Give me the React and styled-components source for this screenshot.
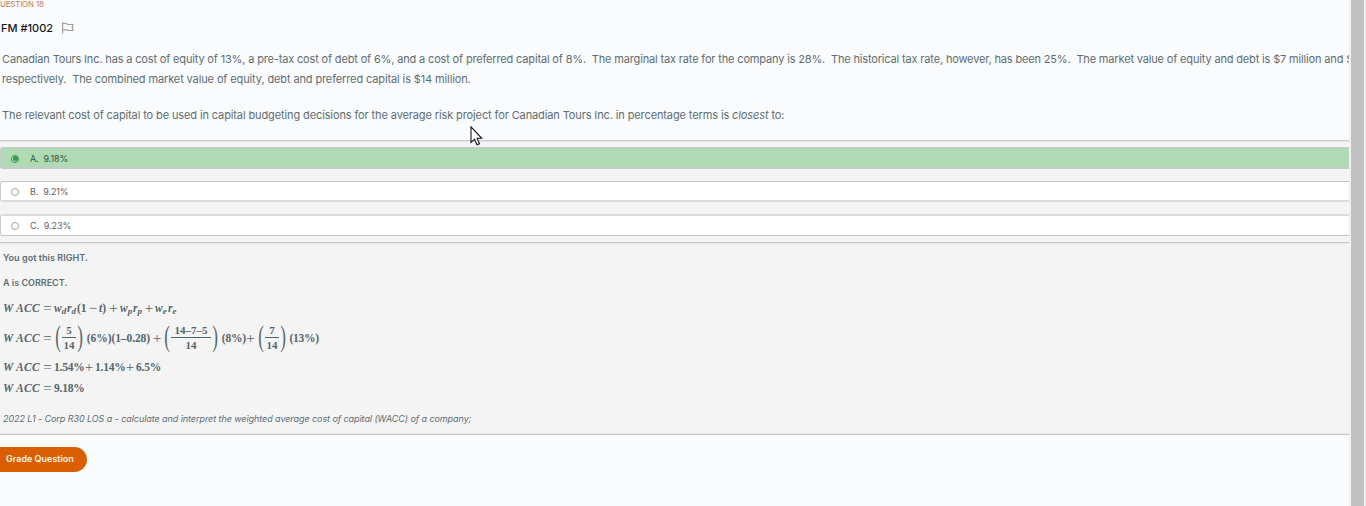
import React from 'react';
import styled, { createGlobalStyle } from 'styled-components';

const GlobalStyle = createGlobalStyle`
  * { box-sizing: border-box; }
  html, body { margin: 0; padding: 0; overflow: hidden; background: #fafbfd; }
  body { font-family: Inter, "Liberation Sans", sans-serif; color: #5d6d73; }
`;

const Screen = styled.div`
  display: flex;
  position: relative;
  width: 1366px;
  height: 506px;
  overflow: hidden;
`;

const Content = styled.main`
  flex: none;
  width: 1349px;
  height: 506px;
  overflow: hidden;
  background: #fafbfd;
`;

const ScrollTrack = styled.div`
  width: 17px;
  height: 506px;
  padding: 0 2px;
  background: #f0f0f0;
`;

const ScrollThumb = styled.div`
  width: 13px;
  height: 100%;
  background: #c1c1c1;
`;

const Eyebrow = styled.div`
  height: 10px;
  margin-left: -6px;
  font-size: 8px;
  line-height: 9px;
  letter-spacing: -0.2px;
  color: #c67c5d;
`;

const TitleRow = styled.div`
  display: flex;
  align-items: center;
  height: 36px;
`;

const Title = styled.h1`
  width: 61px;
  margin: 0 0 0 1px;
  font-size: 11px;
  font-weight: 500;
  line-height: 16px;
  color: #15161c;
  white-space: nowrap;
`;

const Flag = styled.svg`
  width: 12px;
  height: 12px;
  fill: none;
  stroke: #a0a0a0;
  stroke-width: 1.2;
`;

const Stem = styled.div`
  height: 94px;
  padding: 3px 0 0 2px;
  font-size: 11px;
  line-height: 20px;
  white-space: pre;
`;

const StemLine = styled.div`
  height: ${(p) => p.$height || 20}px;
  letter-spacing: ${(p) => p.$track || 0}px;
`;

const AnswerPanel = styled.section`
  height: 295px;
  border-top: 1px solid #c9cbce;
  border-bottom: 1px solid #c8c8c8;
  box-shadow: inset 0 1px #e4e5e7, inset 0 -1px #e6e6e6;
  background: #f4f4f4;
`;

const Options = styled.div`
  display: flex;
  flex-direction: column;
  gap: 12px;
  height: 102px;
  padding-top: 6px;
  border-bottom: 1px solid #c8c8ca;
  box-shadow: 0 1px #e6e6e6;
`;

const Option = styled.label`
  display: flex;
  align-items: center;
  flex: none;
  height: ${(p) => p.$height}px;
  padding: ${(p) => p.$drop || 0}px 0 0 ${(p) => (p.$picked ? 9 : 10)}px;
  border-style: solid;
  border-color: ${(p) => p.$edge};
  border-width: ${(p) => p.$widths};
  border-radius: 3px 0 0 3px;
  background: ${(p) => (p.$picked ? '#aedbb3' : '#fff')};
  color: ${(p) => (p.$picked ? '#37543f' : '#5b6468')};
  font-size: 9px;
  line-height: 12px;
  letter-spacing: -0.1px;
  white-space: pre;
`;

const Radio = styled.span`
  display: flex;
  align-items: center;
  justify-content: center;
  width: 8px;
  height: 8px;
  margin-right: 11px;
  border: 1px solid ${(p) => (p.$picked ? '#3f9650' : '#a0a4a6')};
  border-radius: 50%;
  &::after {
    content: "";
    width: 5px;
    height: 5px;
    border-radius: 50%;
    background: ${(p) => (p.$picked ? '#3f9650' : 'transparent')};
  }
`;

const Feedback = styled.div`
  padding: 1px 0 0 3px;
`;

const Verdict = styled.p`
  height: 25px;
  margin: 0;
  font-size: 9px;
  font-weight: 600;
  line-height: 28px;
  letter-spacing: ${(p) => p.$track || 0}px;
`;

const Equation = styled.div`
  display: flex;
  align-items: center;
  height: ${(p) => p.$height}px;
  font-family: "Liberation Serif", serif;
  font-size: 11.5px;
  font-weight: 700;
  line-height: 14px;
  color: #56656c;
  white-space: nowrap;
`;

const Term = styled.span`
  flex: none;
  width: ${(p) => p.$width}px;
  letter-spacing: ${(p) => p.$track || 0}px;
  font-style: ${(p) => (p.$italic ? 'italic' : 'normal')};
`;

const Operator = styled.span`
  flex: none;
  width: ${(p) => p.$width}px;
  font-size: 15px;
  font-weight: 400;
  text-align: center;
`;

const Subscript = styled.span`
  display: inline-block;
  font-size: 9px;
  line-height: 9px;
  transform: translateY(2px);
`;

const Fraction = styled.span`
  display: flex;
  flex-direction: column;
  flex: none;
  width: ${(p) => p.$width}px;
  text-align: center;
  font-size: 11px;
  line-height: 14px;
`;

const Numerator = styled.span`
  height: 14px;
  border-bottom: 1px solid #526168;
  line-height: 12px;
`;

const Fence = styled.span`
  flex: none;
  width: 8px;
  font-size: 17px;
  font-weight: 400;
  line-height: 17px;
  text-align: center;
  transform: translateY(-2px) scaleY(1.7);
`;

const Reference = styled.p`
  height: 37px;
  margin: 0;
  font-size: 9px;
  font-style: italic;
  line-height: 48px;
  letter-spacing: -0.07px;
  white-space: pre;
`;

const GradeButton = styled.button`
  width: 100px;
  height: 25px;
  margin: 12px 0 0 -13px;
  padding: 0 13px 1px 19px;
  border: 0;
  border-radius: 13px;
  background: #db5e00;
  color: #fff4e8;
  font: 600 9px/24px Inter, "Liberation Sans", sans-serif;
  text-align: left;
  white-space: nowrap;
`;

const Pointer = styled.svg`
  position: absolute;
  left: 470px;
  top: 126px;
  width: 13px;
  height: 20px;
`;

const Wacc = () => (
  <>
    <Term $italic $width={13} $track={0}>W</Term>
    <Term $italic $width={25} $track={0.3}>ACC</Term>
    <Operator $width={13}>=</Operator>
  </>
);

const Sub = ({ base, sub, width }) => (
  <Term $italic $width={width}>{base}<Subscript>{sub}</Subscript></Term>
);

const Frac = ({ top, bottom, width }) => (
  <>
    <Fence>(</Fence>
    <Fraction $width={width}>
      <Numerator>{top}</Numerator>
      <span>{bottom}</span>
    </Fraction>
    <Fence>)</Fence>
  </>
);

const options = [
  { text: 'A.  9.18%', picked: true, height: 22, drop: 2, widths: '1px 0 2px 2px', edge: '#c3ccc9' },
  { text: 'B.  9.21%', height: 21, widths: '1px 0 2px 1px', edge: '#bfc6cb #d8dbdf #d8dbdf #c6ccd1', drop: 1 },
  { text: 'C.  9.23%', height: 22, widths: '2px 0 1px 1px', edge: '#d9dbdf #bfc6cb #bfc6cb #c6ccd1' },
];

export default function App() {
  return (
    <Screen>
      <GlobalStyle />
      <Content>
        <Eyebrow>QUESTION 18</Eyebrow>
        <TitleRow>
          <Title>FM #1002</Title>
          <Flag viewBox="0 0 12 12">
            <path d="M.6 0V11.5M.6 1.5H4.5L5.5 2.5H11L10.2 5L11 8.5H6L5 7.8H.6" />
          </Flag>
        </TitleRow>
        <Stem>
          <StemLine $track={-0.158}>Canadian Tours Inc. has a cost of equity of 13%, a pre-tax cost of debt of 6%, and a cost of preferred capital of 8%.  The marginal tax rate for the company is 28%.  The historical tax rate, however, has been 25%.  The market value of equity and debt is $7 million and $5 million</StemLine>
          <StemLine $track={-0.12} $height={36}>respectively.  The combined market value of equity, debt and preferred capital is $14 million.</StemLine>
          <StemLine $track={-0.115}>The relevant cost of capital to be used in capital budgeting decisions for the average risk project for Canadian Tours Inc. in percentage terms is <em>closest</em> to:</StemLine>
        </Stem>
        <AnswerPanel>
          <Options>
            {options.map((o) => (
              <Option key={o.text} $picked={o.picked} $height={o.height} $drop={o.drop} $widths={o.widths} $edge={o.edge}>
                <Radio $picked={o.picked} />
                {o.text}
              </Option>
            ))}
          </Options>
          <Feedback>
            <Verdict $track={0.05}>You got this RIGHT.</Verdict>
            <Verdict>A is CORRECT.</Verdict>
            <Equation $height={28}>
              <Wacc />
              <Sub base="w" sub="d" width={13} />
              <Sub base="r" sub="d" width={10} />
              <Term $width={10}>(1</Term>
              <Operator $width={12}>−</Operator>
              <Term $width={8}><i>t</i>)</Term>
              <Operator $width={13}>+</Operator>
              <Sub base="w" sub="p" width={13} />
              <Sub base="r" sub="p" width={10} />
              <Operator $width={12}>+</Operator>
              <Sub base="w" sub="e" width={13} />
              <Sub base="r" sub="e" width={10} />
            </Equation>
            <Equation $height={32}>
              <Wacc />
              <Frac top="5" bottom="14" width={14} />
              <Term $width={67} $track={-0.08}>&nbsp;(6%)(1–0.28)</Term>
              <Operator $width={12}>+</Operator>
              <Frac top="14–7–5" bottom="14" width={40} />
              <Term $width={25} $track={-0.15}>&nbsp;(8%)</Term>
              <Operator $width={13}>+</Operator>
              <Frac top="7" bottom="14" width={14} />
              <Term $width={34} $track={-0.3}>&nbsp;(13%)</Term>
            </Equation>
            <Equation $height={26}>
              <Wacc />
              <Term $width={29} $track={-0.2}>1.54%</Term>
              <Operator $width={12}>+</Operator>
              <Term $width={29} $track={-0.2}>1.14%</Term>
              <Operator $width={12}>+</Operator>
              <Term $width={26} $track={-0.2}>6.5%</Term>
            </Equation>
            <Equation $height={15}>
              <Wacc />
              <Term $width={31} $track={-0.2}>9.18%</Term>
            </Equation>
            <Reference>2022 L1 - Corp R30 LOS a - calculate and interpret the weighted average cost of capital (WACC) of a company;</Reference>
          </Feedback>
        </AnswerPanel>
        <GradeButton>Grade Question</GradeButton>
      </Content>
      <ScrollTrack><ScrollThumb /></ScrollTrack>
      <Pointer viewBox="0 0 13 20">
        <path d="M1 .8V16.5L4.5 13.2L7 18.7L9.5 17.6L7.1 12.3H11.8Z" fill="#fff" stroke="#16161c" strokeWidth="1.1" />
      </Pointer>
    </Screen>
  );
}
